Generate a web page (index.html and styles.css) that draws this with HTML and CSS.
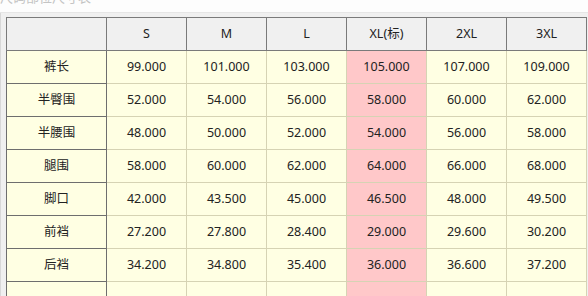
FILE: index.html
```html
<!DOCTYPE html>
<html>
<head>
<meta charset="utf-8">
<link rel="stylesheet" href="styles.css">
</head>
<body>
<div class="title"><span>尺码部位尺寸表</span></div>
<div class="frame">
<table class="grid">
<colgroup><col class="c0"><col class="cw"><col class="cw"><col class="cw"><col class="cw"><col class="cw"><col class="cw"></colgroup>
<thead>
<tr><th class="corner"></th><th>S</th><th>M</th><th>L</th><th>XL(标)</th><th>2XL</th><th>3XL</th></tr>
</thead>
<tbody>
<tr><td class="name">裤长</td><td>99.000</td><td>101.000</td><td>103.000</td><td class="std">105.000</td><td>107.000</td><td>109.000</td></tr>
<tr><td class="name">半臀围</td><td>52.000</td><td>54.000</td><td>56.000</td><td class="std">58.000</td><td>60.000</td><td>62.000</td></tr>
<tr><td class="name">半腰围</td><td>48.000</td><td>50.000</td><td>52.000</td><td class="std">54.000</td><td>56.000</td><td>58.000</td></tr>
<tr><td class="name">腿围</td><td>58.000</td><td>60.000</td><td>62.000</td><td class="std">64.000</td><td>66.000</td><td>68.000</td></tr>
<tr><td class="name">脚口</td><td>42.000</td><td>43.500</td><td>45.000</td><td class="std">46.500</td><td>48.000</td><td>49.500</td></tr>
<tr><td class="name">前裆</td><td>27.200</td><td>27.800</td><td>28.400</td><td class="std">29.000</td><td>29.600</td><td>30.200</td></tr>
<tr><td class="name">后裆</td><td>34.200</td><td>34.800</td><td>35.400</td><td class="std">36.000</td><td>36.600</td><td>37.200</td></tr>
<tr><td class="name"></td><td></td><td></td><td></td><td class="std"></td><td></td><td></td></tr>
</tbody>
</table>
</div>
</body>
</html>
```
FILE: styles.css
```css
html, body {
  margin: 0;
  padding: 0;
  background: #fdfdfd;
  overflow: hidden;
  height: 296px;
}
body {
  font-family: "Noto Sans", "Noto Sans CJK SC", sans-serif;
  font-size: 12.5px;
  color: #222;
}
.title {
  height: 12px;
  overflow: hidden;
  border-bottom: 1px solid #e6e6e6;
}
.title span {
  display: block;
  margin-top: -11px;
  padding-left: 0;
  font-size: 13px;
  color: #c4c4c4;
  line-height: 16px;
}
.frame {
  background: #f0f0f0;
  padding: 4px 0 0 4px;
  border-left: 1px solid #d8d8d8;
  height: 279px;
}
.grid {
  border-collapse: collapse;
  table-layout: fixed;
  width: 581px;
  margin-left: 1px;
  border-left: 1px solid #777;
}
.c0 { width: 100px; }
.cw { width: 80px; }
.grid th {
  background: #f0f0f0;
  font-weight: normal;
  height: 32px;
  padding: 0;
  border: 1px solid #7a7a7a;
  text-align: center;
  line-height: 32px;
}
.grid td {
  background: #ffffe3;
  height: 32px;
  padding: 0;
  text-align: center;
  border: 1px solid #d6d3b4;
  line-height: 32px;
}
.grid td.name {
  border: 1px solid #6e6e6e;
}
.grid td.std {
  background: #ffc8c9;
}
```
